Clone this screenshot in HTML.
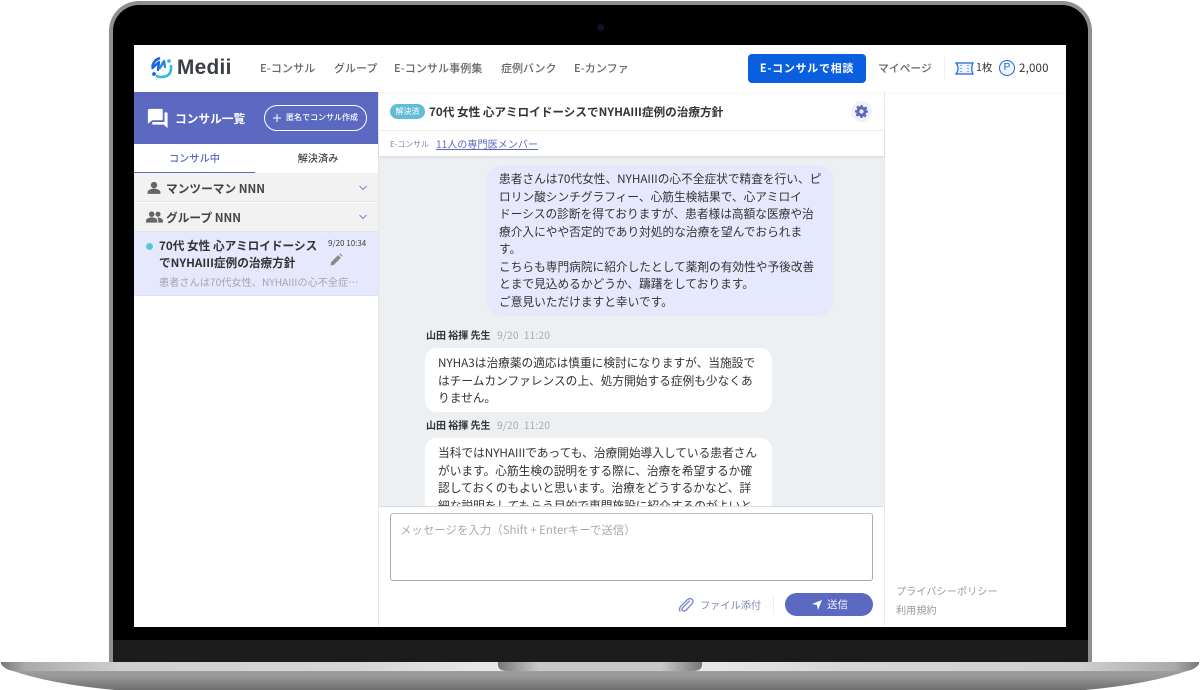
<!DOCTYPE html>
<html lang="ja"><head><meta charset="utf-8"><style>
*{box-sizing:border-box;margin:0;padding:0}
html,body{width:1200px;height:690px;overflow:hidden;background:#fff}
body{position:relative;font-family:"Noto Sans CJK JP","Liberation Sans",sans-serif;color:#333}
.a{position:absolute;white-space:nowrap}
.nav{font-size:11px;font-weight:500;color:#666;top:60px;line-height:16px;letter-spacing:.15px}
.msg{font-size:11.7px;line-height:17.55px;color:#333}
.nm{font-size:10px;font-weight:700;color:#333;line-height:14px}
.tm{font-size:10.3px;color:#aaa;line-height:14px}
</style></head><body>
<!-- laptop -->
<div class="a" style="left:109px;top:1px;width:983px;height:662px;background:#8f8f8f;border-radius:30px 30px 0 0"></div>
<div class="a" style="left:113px;top:5px;width:975px;height:657px;background:#000;border-radius:26px 26px 0 0"></div>
<div class="a" style="left:113px;top:640px;width:975px;height:22px;background:#1c1c1c"></div>
<div class="a" style="left:597px;top:24px;width:7px;height:7px;border-radius:50%;background:#0c1424"></div>
<svg class="a" style="left:0;top:661px" width="1200" height="29" viewBox="0 0 1200 29">
<defs>
<linearGradient id="t" x1="0" x2="1" y1="0" y2="0"><stop offset="0" stop-color="#777"/><stop offset=".02" stop-color="#aaa"/><stop offset=".1" stop-color="#cfcfcf"/><stop offset=".3" stop-color="#d6d6d6"/><stop offset=".41" stop-color="#e8e8e8"/><stop offset=".59" stop-color="#e8e8e8"/><stop offset=".7" stop-color="#d6d6d6"/><stop offset=".9" stop-color="#cfcfcf"/><stop offset=".98" stop-color="#aaa"/><stop offset="1" stop-color="#777"/></linearGradient>
<linearGradient id="b" x1="0" x2="0" y1="0" y2="1"><stop offset="0" stop-color="#a0a0a0"/><stop offset=".35" stop-color="#969696"/><stop offset="1" stop-color="#6e6e6e"/></linearGradient>
<linearGradient id="n" x1="0" x2="1" y1="0" y2="0"><stop offset="0" stop-color="#777"/><stop offset=".2" stop-color="#c8c8c8"/><stop offset=".8" stop-color="#c8c8c8"/><stop offset="1" stop-color="#777"/></linearGradient>
</defs>
<path d="M10 9 H1190 Q1150 23 1085 29 H115 Q50 23 10 9Z" fill="url(#b)"/>
<path d="M1 1 H1199 V3 Q1195 9 1186 10 H14 Q5 9 1 3Z" fill="url(#t)"/>
<path d="M498 1 H702 V4 Q702 10 692 10 H508 Q498 10 498 4Z" fill="url(#n)"/>
</svg>
<!-- screen -->
<div class="a" style="left:134px;top:45px;width:932px;height:582px;background:#fff;overflow:hidden">
<div class="a" style="left:0;top:0;width:932px;height:47px;background:#fff;box-shadow:0 1px 4px rgba(0,0,0,.05);z-index:5"></div>
</div>
<!-- logo -->
<svg class="a" style="left:150px;top:56px;z-index:6" width="24" height="24" viewBox="0 0 24 24" fill="none" stroke-linecap="round">
<path d="M9 2.5 Q4 4 2.5 10" stroke="#1a63d8" stroke-width="2.6"/>
<path d="M2.5 12 L9 6 L8 14" stroke="#1a63d8" stroke-width="2.4" stroke-linejoin="round"/>
<circle cx="4" cy="18" r="1.9" fill="#1a63d8"/>
<path d="M10 12 L14 5 L15 11" stroke="#2c86de" stroke-width="2.4" stroke-linejoin="round"/>
<circle cx="19" cy="5" r="1.8" fill="#2cb6e2"/>
<path d="M21 10 Q22 21 11 21 Q8 21 7 20" stroke="#2cb6e2" stroke-width="2.6"/>
</svg>
<div class="a" style="left:177px;top:54px;font:700 20.800px/28px 'Liberation Sans',sans-serif;color:#3a3f45;z-index:6;letter-spacing:.3px">Medii</div>
<div style="position:relative;z-index:6">
<div class="a nav" style="left:260px">E-コンサル</div>
<div class="a nav" style="left:334px;letter-spacing:0">グループ</div>
<div class="a nav" style="left:394px;letter-spacing:.1px">E-コンサル事例集</div>
<div class="a nav" style="left:501px;letter-spacing:0">症例バンク</div>
<div class="a nav" style="left:574px;letter-spacing:.1px">E-カンファ</div>
<div class="a" style="left:748px;top:54px;width:118px;height:29px;background:#0a5fe0;border-radius:4px;color:#fff;font-size:11px;font-weight:700;text-align:center;line-height:29px;letter-spacing:.7px">E-コンサルで相談</div>
<div class="a nav" style="left:878px;top:60px;letter-spacing:0;font-size:10.800px">マイページ</div>
<div class="a" style="left:944px;top:57px;width:1px;height:22px;background:#eee"></div>
<svg class="a" style="left:955px;top:62px" width="19" height="13" viewBox="0 0 19 13" fill="#eaf2fd" stroke="#1a63d8" stroke-width="1.2"><path d="M1 1 H18 Q16.500 3.500 17 6.500 Q16.500 9.500 18 12 H1 Q3 9.500 3 6.500 Q3 3.500 1 1Z"/><path d="M6 3v1M6 6v1M6 9v1M13 3v1M13 6v1M13 9v1" stroke-width="1"/></svg>
<div class="a" style="left:976px;top:60px;font-size:10.500px;line-height:16px;color:#333">1枚</div>
<div class="a" style="left:999px;top:60px;width:16px;height:16px;border:1.2px solid #1a63d8;border-radius:50%;background:#eef4fd;color:#1a63d8;font:10px/14px 'Liberation Sans',sans-serif;text-align:center">P</div>
<div class="a" style="left:1019px;top:60px;font-size:11.500px;line-height:16px;color:#333;letter-spacing:.2px">2,000</div>
</div>
<!-- sidebar -->
<div class="a" style="left:134px;top:92px;width:245px;height:535px;background:#fff;border-right:1px solid #e6e6e6"></div>
<div class="a" style="left:134px;top:92px;width:244px;height:52px;background:#5c69c1"></div>
<svg class="a" style="left:147px;top:108px" width="21" height="21" viewBox="0 0 24 24" fill="#fff"><path d="M3 1 H17 Q18 1 18 2 V13 Q18 14 17 14 H6 L1 18 V3 Q1 1 3 1Z"/><path d="M20 5 H22.500 Q23.500 5 23.500 6 V23 L19 19 H6 V16 H20Z"/></svg>
<div class="a" style="left:175px;top:110px;color:#fff;font-size:11.700px;font-weight:700;line-height:17px">コンサル一覧</div>
<div class="a" style="left:264px;top:105px;width:103px;height:26px;border:1px solid #fff;border-radius:13px"></div>
<svg class="a" style="left:272px;top:113px" width="10" height="10" viewBox="0 0 10 10" stroke="#fff" stroke-width="1"><path d="M5 1v8M1 5h8"/></svg>
<div class="a" style="left:286px;top:111px;color:#fff;font-size:8px;font-weight:500;line-height:14px">匿名でコンサル作成</div>
<div class="a" style="left:134px;top:144px;width:121px;height:28px;text-align:center;font-size:10.200px;font-weight:500;color:#5c69c1;line-height:28px">コンサル中</div>
<div class="a" style="left:255px;top:144px;width:126px;height:28px;text-align:center;font-size:10.200px;font-weight:500;color:#444;line-height:28px">解決済み</div>
<div class="a" style="left:134px;top:172px;width:121px;height:1.500px;background:#5c69c1"></div>
<div class="a" style="left:134px;top:173px;width:244px;height:29px;background:#f2f2f2;border-bottom:1px solid #e4e4e4"></div>
<div class="a" style="left:134px;top:203px;width:244px;height:29px;background:#f2f2f2;border-bottom:1px solid #e4e4e4"></div>
<svg class="a" style="left:147px;top:181px" width="14" height="14" viewBox="0 0 24 24" fill="#666"><circle cx="12" cy="7" r="5.500"/><path d="M1 22v-3c0-4 7-6 11-6s11 2 11 6v3z"/></svg>
<div class="a" style="left:166px;top:180px;font-size:11.700px;font-weight:700;color:#444;line-height:17px">マンツーマン NNN</div>
<svg class="a" style="left:359px;top:185px" width="8" height="6" viewBox="0 0 8 6" fill="none" stroke="#7d86c9" stroke-width="1"><path d="M.5 1 L4 4.500 L7.500 1"/></svg>
<svg class="a" style="left:146px;top:210px" width="17" height="14" viewBox="0 0 24 20" fill="#666"><circle cx="8" cy="6" r="4"/><circle cx="17" cy="6" r="3.600"/><path d="M0 18v-3c0-3 5-4.500 8-4.500s8 1.500 8 4.500v3z"/><path d="M17.500 18v-3c0-1.500-.7-3-2-4 3-.6 8.500.8 8.500 4v3z"/></svg>
<div class="a" style="left:166px;top:209px;font-size:11.700px;font-weight:700;color:#444;line-height:17px">グループ NNN</div>
<svg class="a" style="left:359px;top:214px" width="8" height="6" viewBox="0 0 8 6" fill="none" stroke="#7d86c9" stroke-width="1"><path d="M.5 1 L4 4.500 L7.500 1"/></svg>
<div class="a" style="left:134px;top:232px;width:244px;height:64px;background:#e6e9fd;border-bottom:1px solid #e0e0ea"></div>
<div class="a" style="left:146px;top:243px;width:7px;height:7px;border-radius:50%;background:#5dc2dc"></div>
<div class="a" style="left:159px;top:238px;font-size:11.650px;font-weight:700;color:#333;line-height:16.500px">70代 女性 心アミロイドーシス<br>でNYHAIII症例の治療方針</div>
<div class="a" style="left:328px;top:238px;font-size:8px;color:#444;line-height:12px">9/20 10:34</div>
<svg class="a" style="left:330px;top:253px" width="13" height="13" viewBox="0 0 24 24" fill="#8a8a8a"><path d="M1 23 L2 17 L15 4 L20 9 L7 22Z"/><path d="M17 2 L19 1 L23 5 L22 7Z"/></svg>
<div class="a" style="left:159px;top:274px;font-size:10.200px;color:#a4a4ae;line-height:16px">患者さんは70代女性、NYHAIIIの心不全症…</div>
<!-- main -->
<div class="a" style="left:379px;top:92px;width:505px;height:39px;background:#fff;border-bottom:1px solid #eee"></div>
<div class="a" style="left:379px;top:131px;width:505px;height:25px;background:#fff;box-shadow:0 1px 3px rgba(0,0,0,.1);z-index:2"></div>
<div class="a" style="left:390px;top:104px;width:35px;height:15px;border-radius:8px;background:#63bcd6;color:#fff;font-size:8px;text-align:center;line-height:15px;z-index:3">解決済</div>
<div class="a" style="left:429px;top:103px;font-size:11.640px;font-weight:700;color:#333;line-height:17px;z-index:3">70代 女性 心アミロイドーシスでNYHAIII症例の治療方針</div>
<div class="a" style="left:851px;top:101px;width:21px;height:21px;border-radius:50%;background:#f0f2f6;z-index:3"></div>
<svg class="a" style="left:855px;top:105px;z-index:3" width="13" height="13" viewBox="0 0 24 24" fill="#5c69c1"><path fill-rule="evenodd" d="M10 0h4l.7 3.400 2.400 1 2.900-1.900 2.800 2.800-1.900 2.900 1 2.400L24 10.300v3.700l-3.400.7-1 2.400 1.900 2.900-2.800 2.800-2.900-1.900-2.400 1L14 24h-4l-.7-3.400-2.400-1L4 21.500 1.200 18.700l1.900-2.900-1-2.400L0 14v-4l3.400-.7 1-2.400L2.500 4 5.300 1.200l2.900 1.900 2.400-1zM12 8a4 4 0 100 8 4 4 0 000-8z"/></svg>
<div class="a" style="left:390px;top:138px;font-size:7.900px;color:#7d86b5;line-height:13px;z-index:3">E-コンサル</div>
<div class="a" style="left:436px;top:136px;font-size:10.100px;color:#5c69c1;line-height:15px;text-decoration:underline;z-index:3">11人の専門医メンバー</div>
<div class="a" style="left:379px;top:156px;width:505px;height:350px;background:#edf0f3;overflow:hidden">
<div class="a" style="left:108px;top:9px;width:346px;height:151px;background:#e6e9fd;border-radius:14px"></div>
<div class="a msg" style="left:120px;top:14px">患者さんは70代女性、NYHAIIIの心不全症状で精査を行い、ピ<br>ロリン酸シンチグラフィー、心筋生検結果で、心アミロイ<br>ドーシスの診断を得ておりますが、患者様は高額な医療や治<br>療介入にやや否定的であり対処的な治療を望んでおられま<br>す。<br>こちらも専門病院に紹介したとして薬剤の有効性や予後改善<br>とまで見込めるかどうか、躊躇をしております。<br>ご意見いただけますと幸いです。</div>
<div class="a nm" style="left:47px;top:172px">山田 裕揮 先生</div>
<div class="a tm" style="left:118px;top:172px;letter-spacing:.15px">9/20&nbsp; 11:20</div>
<div class="a" style="left:46px;top:192px;width:347px;height:64px;background:#fff;border-radius:12px"></div>
<div class="a msg" style="left:59px;top:198px">NYHA3は治療薬の適応は慎重に検討になりますが、当施設で<br>はチームカンファレンスの上、処方開始する症例も少なくあ<br>りません。</div>
<div class="a nm" style="left:47px;top:262px">山田 裕揮 先生</div>
<div class="a tm" style="left:118px;top:262px;letter-spacing:.15px">9/20&nbsp; 11:20</div>
<div class="a" style="left:46px;top:282px;width:347px;height:100px;background:#fff;border-radius:12px"></div>
<div class="a msg" style="left:59px;top:288px">当科ではNYHAIIIであっても、治療開始導入している患者さん<br>がいます。心筋生検の説明をする際に、治療を希望するか確<br>認しておくのもよいと思います。治療をどうするかなど、詳<br>細な説明をしてもらう目的で専門施設に紹介するのがよいと</div>
</div>
<div class="a" style="left:379px;top:506px;width:505px;height:121px;background:#fff;border-top:1px solid #ddd"></div>
<div class="a" style="left:390px;top:513px;width:483px;height:68px;border:1px solid #aaa;border-top-color:#c4c4c4;border-radius:3px;background:#fff"></div>
<div class="a" style="left:400px;top:522px;font-size:11.450px;color:#aaa;line-height:17px">メッセージを入力（Shift + Enterキーで送信）</div>
<svg class="a" style="left:678px;top:597px" width="16" height="16" viewBox="0 0 24 24" fill="none" stroke="#7d86c9" stroke-width="2" stroke-linecap="round"><path d="M17 6 L7 16 Q5 19 7 20.500 Q9 22 12 20 L21 10 Q24 6 21 3.500 Q18 1 14 4 L4 14 Q1 18 3 21"/></svg>
<div class="a" style="left:700px;top:597px;font-size:10.200px;color:#7d86b5;line-height:15px">ファイル添付</div>
<div class="a" style="left:773px;top:596px;width:1px;height:18px;background:#eee"></div>
<div class="a" style="left:785px;top:593px;width:88px;height:23px;background:#5c69c1;border-radius:12px"></div>
<svg class="a" style="left:812px;top:600px" width="10" height="10" viewBox="0 0 10 10" fill="#fff"><path d="M0 4 L10 0 L6 10 L5 5Z"/></svg>
<div class="a" style="left:827px;top:597px;color:#eef;font-size:10.500px;line-height:15px">送信</div>
<!-- right -->
<div class="a" style="left:884px;top:92px;width:1px;height:535px;background:#e8e8e8"></div>
<div class="a" style="left:896px;top:583px;font-size:10.200px;color:#999;line-height:15px">プライバシーポリシー</div>
<div class="a" style="left:896px;top:602px;font-size:10.200px;color:#999;line-height:15px">利用規約</div>
</body></html>
